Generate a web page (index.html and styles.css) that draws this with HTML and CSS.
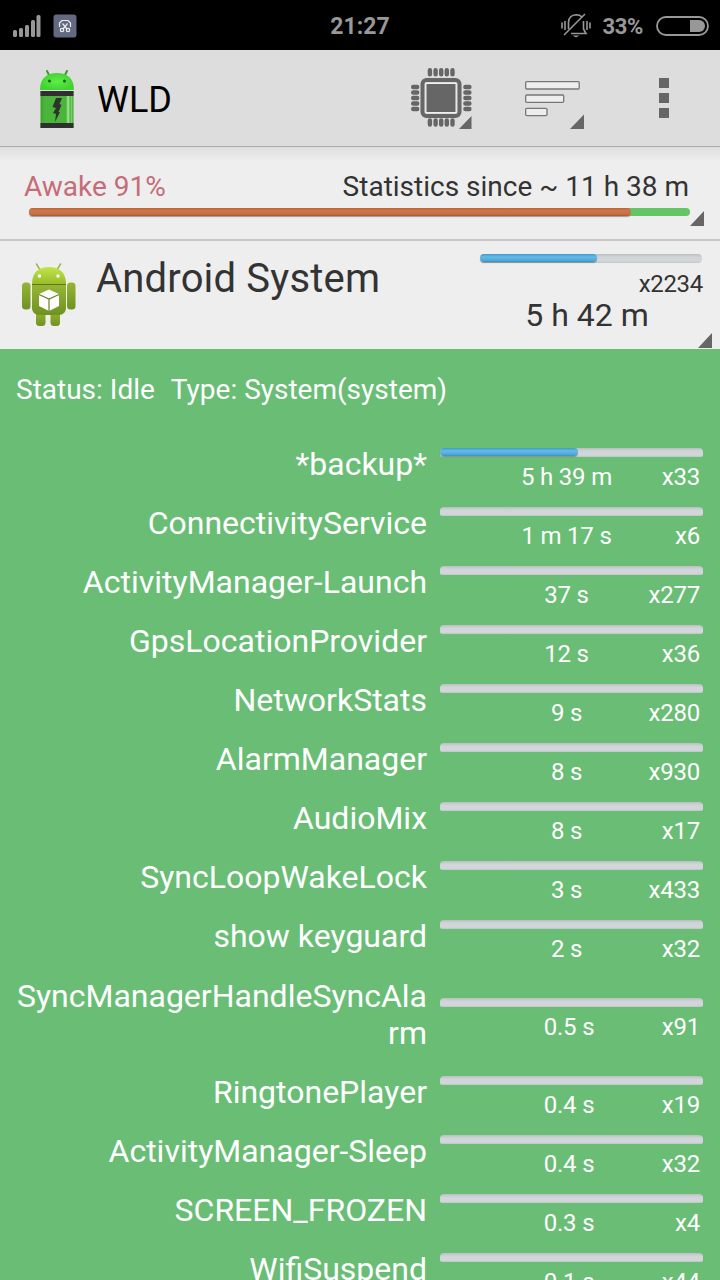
FILE: index.html
```html
<!DOCTYPE html>
<html lang="en">
<head>
    <meta charset="UTF-8">
    <meta name="viewport" content="width=device-width, initial-scale=1.0">
    <title>WLD</title>
    <link rel="stylesheet" href="styles.css">
</head>
<body>
    <div class="status-bar">
        <div class="status-left">
            <svg width="28" height="22" viewBox="0 0 28 22" fill="#989898">
                <rect x="0" y="15" width="4" height="7" rx="1.5"/>
                <rect x="6" y="13" width="4" height="9" rx="1.5"/>
                <rect x="12" y="10" width="4" height="12" rx="1.5"/>
                <rect x="18" y="5" width="4" height="17" rx="1.5"/>
                <rect x="23.5" y="0" width="4" height="22" rx="1.5"/>
            </svg>
            <svg width="24" height="24" viewBox="0 0 24 24">
                <rect x="0.5" y="0.5" width="23" height="23" rx="3" fill="#636980"/>
                <g fill="none" stroke="#eee" stroke-width="1.2">
                    <path d="M6.5 13V9L9 6.500H15L17.500 9V13"/>
                    <path d="M9.500 9.500L14 15M14.500 9.500L10 15"/>
                    <circle cx="9" cy="16" r="1.700"/>
                    <circle cx="15" cy="16" r="1.700"/>
                </g>
            </svg>
        </div>
        <div class="clock">21:27</div>
        <div class="status-right">
            <svg width="30" height="25" viewBox="0 0 30 25" fill="none" stroke="#989898" stroke-width="1.600">
                <path d="M7.500 16V9C8 4 11 2 15 1.800C17.500 1.800 19.500 2.500 21 4M22.500 8V16L25 20.500H10"/>
                <path d="M3 22L24 1"/>
                <path d="M1 9.500V15.500M4 8V17M26 8V17M29 9.500V15.500"/>
                <path d="M11.500 22.500H18.500L15 24.500Z" fill="#989898" stroke="none"/>
            </svg>
            <span class="percent">33%</span>
            <svg width="53" height="20" viewBox="0 0 53 20">
                <rect x="1" y="1" width="51" height="18" rx="9" fill="none" stroke="#989898" stroke-width="1.800"/>
                <path d="M34 4H43A6 6 0 0 1 43 16H34Z" fill="#989898"/>
            </svg>
        </div>
    </div>

    <div class="action-bar">
        <svg class="app-icon" width="36" height="60" viewBox="0 0 36 60">
            <defs>
                <linearGradient id="can" x1="0" x2="1" y1="0" y2="0">
                    <stop offset="0" stop-color="#3ea52b"/>
                    <stop offset="0.15" stop-color="#4cb63c"/>
                    <stop offset="0.77" stop-color="#4bb43b"/>
                    <stop offset="0.84" stop-color="#a5e79b"/>
                    <stop offset="0.9" stop-color="#4eb83e"/>
                    <stop offset="0.94" stop-color="#72d466"/>
                    <stop offset="1" stop-color="#3f9f30"/>
                </linearGradient>
                <radialGradient id="head">
                    <stop offset="0" stop-color="#5fee4b"/>
                    <stop offset="1" stop-color="#42d332"/>
                </radialGradient>
            </defs>
            <path d="M8 2L11 8M28 2L25 8" stroke="#3f963a" stroke-width="2" stroke-linecap="round"/>
            <path d="M1 21C1 9 8 4 18 4S35 9 35 21Z" fill="url(#head)"/>
            <circle cx="10.500" cy="12" r="1.500" fill="#17601b"/>
            <circle cx="25.500" cy="12" r="1.500" fill="#17601b"/>
            <rect x="1.500" y="22" width="33" height="37" fill="url(#can)"/>
            <rect x="1.500" y="22" width="33" height="5" fill="#303030"/>
            <rect x="1.500" y="54" width="33" height="5" fill="#303030"/>
            <path d="M17 29H23L20.500 35L22.500 36L19.500 43H21L16 53L17 45L14 44L17 39L13.500 38Z" fill="#2b352b"/>
        </svg>
        <h1 class="app-title">WLD</h1>
        <svg class="icon-cpu" width="64" height="64" viewBox="0 0 64 64">
            <g stroke="#666" stroke-width="4.400" stroke-linecap="round">
                <path d="M8.900 5.200V9.300M14.600 5.200V9.300M20.200 5.200V9.300M25.800 5.200V9.300M31.500 5.200V9.300M8.900 55.500V59.500M14.600 55.500V59.500M20.200 55.500V59.500M25.800 55.500V59.500M31.500 55.500V59.500" transform="translate(11 -2)"/>
                <path d="M3.200 20H7.200M3.200 25.500H7.200M3.200 31H7.200M3.200 36.500H7.200M3.200 42H7.200M55.400 20H59.400M55.400 25.500H59.400M55.400 31H59.400M55.400 36.500H59.400M55.400 42H59.400"/>
            </g>
            <rect x="12.500" y="13" width="37" height="36" rx="4" fill="#ddd" stroke="#666" stroke-width="4"/>
            <rect x="16" y="16.500" width="30" height="29" fill="#666" stroke="#f0f0f0" stroke-width="1"/>
            <path d="M48 62.500H62V48Z" fill="#666" stroke="#ddd" stroke-width="1"/>
        </svg>
        <svg class="icon-sort" width="60" height="49" viewBox="0 0 60 49">
            <g fill="#eee" stroke="#777" stroke-width="1.300">
                <rect x="0.700" y="1.700" width="53.500" height="7.300" rx="1"/>
                <rect x="0.700" y="15" width="38" height="7.300" rx="1"/>
                <rect x="0.700" y="28.300" width="21.300" height="7.300" rx="1"/>
            </g>
            <path d="M45 49H59V34.500Z" fill="#666"/>
        </svg>
        <svg class="icon-more" width="10" height="40" viewBox="0 0 10 40" fill="#666">
            <rect width="10" height="10"/>
            <rect y="15" width="10" height="10"/>
            <rect y="30" width="10" height="10"/>
        </svg>
    </div>

    <div class="stats">
        <div class="stats-text">
            <span class="awake">Awake 91%</span>
            <span>Statistics since ~ 11 h 38 m</span>
        </div>
        <div class="awake-bar"><div class="awake-fill" style="width: 91%"></div></div>
        <div class="corner"></div>
    </div>

    <div class="app-row">
        <svg class="android-icon" width="56" height="64" viewBox="0 0 56 64">
            <defs>
                <linearGradient id="droid" x1="0" x2="0" y1="0" y2="1">
                    <stop offset="0" stop-color="#96b632"/>
                    <stop offset="1" stop-color="#6e9223"/>
                </linearGradient>
                <linearGradient id="droidHead" x1="0" x2="0" y1="0" y2="1">
                    <stop offset="0" stop-color="#c2e54b"/>
                    <stop offset="1" stop-color="#98bd2a"/>
                </linearGradient>
            </defs>
            <path d="M15.500 1L19 7M39.500 1L36 7" stroke="#9ab84b" stroke-width="1.500" stroke-linecap="round"/>
            <g fill="url(#droid)">
                <rect x="15" y="48" width="9.500" height="15" rx="3.500"/>
                <rect x="29.500" y="48" width="9.500" height="15" rx="3.500"/>
                <rect x="1" y="19.500" width="8.500" height="27" rx="3.500"/>
                <rect x="46" y="19.500" width="8.500" height="27" rx="3.500"/>
                <path d="M11 22H45V45C45 49 42 52 38 52H18C14 52 11 49 11 45Z"/>
            </g>
            <path d="M11 21C11 9 18 4 28 4S45 9 45 21Z" fill="url(#droidHead)"/>
            <path d="M11 21.500H45" stroke="#60771f" stroke-width="1"/>
            <circle cx="18.500" cy="13" r="1.700" fill="#fff"/>
            <circle cx="37" cy="13" r="1.700" fill="#fff"/>
            <path d="M28 26.500L38 31V43L28 48L18 43V31Z" fill="#fff"/>
            <path d="M18 31.500L28 36L38 31.500M28 36V48" fill="none" stroke="#64842a" stroke-width="1.200"/>
        </svg>
        <div class="app-name">Android System</div>
        <div class="app-usage">
            <div class="bar"><div class="fill" style="width: 52.5%"></div></div>
            <div class="app-count">x2234</div>
            <div class="app-time">5 h 42 m</div>
        </div>
        <div class="corner"></div>
    </div>

    <div class="details">
        <div class="app-status"><span>Status: Idle</span><span>Type: System(system)</span></div>
        <div class="wakelock">
            <div class="name">*backup*</div>
            <div class="usage">
                <div class="bar"><div class="fill" style="width: 52.3%"></div></div>
                <div class="values"><span class="time">5 h 39 m</span><span class="count">x33</span></div>
            </div>
        </div>
        <div class="wakelock">
            <div class="name">ConnectivityService</div>
            <div class="usage">
                <div class="bar"></div>
                <div class="values"><span class="time">1 m 17 s</span><span class="count">x6</span></div>
            </div>
        </div>
        <div class="wakelock">
            <div class="name">ActivityManager-Launch</div>
            <div class="usage">
                <div class="bar"></div>
                <div class="values"><span class="time">37 s</span><span class="count">x277</span></div>
            </div>
        </div>
        <div class="wakelock">
            <div class="name">GpsLocationProvider</div>
            <div class="usage">
                <div class="bar"></div>
                <div class="values"><span class="time">12 s</span><span class="count">x36</span></div>
            </div>
        </div>
        <div class="wakelock">
            <div class="name">NetworkStats</div>
            <div class="usage">
                <div class="bar"></div>
                <div class="values"><span class="time">9 s</span><span class="count">x280</span></div>
            </div>
        </div>
        <div class="wakelock">
            <div class="name">AlarmManager</div>
            <div class="usage">
                <div class="bar"></div>
                <div class="values"><span class="time">8 s</span><span class="count">x930</span></div>
            </div>
        </div>
        <div class="wakelock">
            <div class="name">AudioMix</div>
            <div class="usage">
                <div class="bar"></div>
                <div class="values"><span class="time">8 s</span><span class="count">x17</span></div>
            </div>
        </div>
        <div class="wakelock">
            <div class="name">SyncLoopWakeLock</div>
            <div class="usage">
                <div class="bar"></div>
                <div class="values"><span class="time">3 s</span><span class="count">x433</span></div>
            </div>
        </div>
        <div class="wakelock">
            <div class="name">show keyguard</div>
            <div class="usage">
                <div class="bar"></div>
                <div class="values"><span class="time">2 s</span><span class="count">x32</span></div>
            </div>
        </div>
        <div class="wakelock two-line">
            <div class="name">SyncManagerHandleSyncAlarm</div>
            <div class="usage">
                <div class="bar"></div>
                <div class="values"><span class="time fraction">0.5 s</span><span class="count">x91</span></div>
            </div>
        </div>
        <div class="wakelock">
            <div class="name">RingtonePlayer</div>
            <div class="usage">
                <div class="bar"></div>
                <div class="values"><span class="time fraction">0.4 s</span><span class="count">x19</span></div>
            </div>
        </div>
        <div class="wakelock">
            <div class="name">ActivityManager-Sleep</div>
            <div class="usage">
                <div class="bar"></div>
                <div class="values"><span class="time fraction">0.4 s</span><span class="count">x32</span></div>
            </div>
        </div>
        <div class="wakelock">
            <div class="name">SCREEN_FROZEN</div>
            <div class="usage">
                <div class="bar"></div>
                <div class="values"><span class="time fraction">0.3 s</span><span class="count">x4</span></div>
            </div>
        </div>
        <div class="wakelock">
            <div class="name">WifiSuspend</div>
            <div class="usage">
                <div class="bar"></div>
                <div class="values"><span class="time fraction">0.1 s</span><span class="count">x44</span></div>
            </div>
        </div>
    </div>
</body>
</html>
```
FILE: styles.css
```css
* { box-sizing: border-box; }
body {
    font-family: Roboto, sans-serif;
    width: 720px;
    height: 1280px;
    margin: 0;
    overflow: hidden;
    display: flex;
    flex-direction: column;
    background-color: #eee;
    color: #333;
}
svg { display: block; flex: none; }

/* status bar */
.status-bar {
    height: 50px;
    flex: none;
    display: grid;
    grid-template-columns: 1fr auto 1fr;
    align-items: center;
    padding: 1px 11px 0 13px;
    background-color: #000;
    color: #989898;
    font-weight: bold;
}
.status-left { display: flex; align-items: center; gap: 12px; }
.clock { margin-right: 2px; padding-top: 1px; font-size: 23px; }
.status-right { display: flex; align-items: center; justify-content: flex-end; gap: 13px; }
.percent { margin-left: -2px; padding-top: 1px; font-size: 22px; letter-spacing: -0.3px; }

/* action bar */
.action-bar {
    height: 97px;
    flex: none;
    display: flex;
    align-items: flex-start;
    padding: 0 51px 0 39px;
    background-color: #ddd;
    border-bottom: 1px solid #aaa;
}
.app-icon { margin-top: 19px; }
.app-title { margin: 0 auto 0 22px; font-size: 36px; font-weight: normal; line-height: 42px; padding-top: 29px; color: #000; }
.icon-cpu { margin: 17px 51px 0 0; }
.icon-sort { margin: 30px 74px 0 0; }
.icon-more { margin-top: 28px; }

/* small dark triangle of a spinner */
.corner {
    position: absolute;
    right: 16px;
    bottom: 13px;
    width: 14px;
    height: 15px;
    background-color: #666;
    clip-path: polygon(100% 0, 100% 100%, 0 100%);
}

.stats {
    position: relative;
    height: 94px;
    flex: none;
    padding: 23px 30px 0 29px;
    background: linear-gradient(#dedede, #eee 14px);
    border-bottom: 2px solid #c6c6c6;
}
.stats-text { display: flex; justify-content: space-between; margin: 0 1px 0 -5px; font-size: 28px; line-height: 33px; }
.awake { color: #c66c78; }
.awake-bar { height: 8px; margin-top: 5px; border-radius: 4px; background-color: #65c466; }
.awake-fill {
    height: 8px;
    border-radius: 4px;
    background: linear-gradient(#b86637, #d47347 30%, #ca6f45 75%, #966039);
    box-shadow: 0 1px 1px #999;
}

.app-row { position: relative; height: 108px; flex: none; display: flex; padding: 0 18px 0 21px; }
.app-row .corner { right: 8px; bottom: 1px; }
.android-icon { margin-top: 22px; }
.app-name { margin-left: 19px; margin-top: 14px; font-size: 40px; line-height: 47px; letter-spacing: 0.18px; }
.app-usage { width: 222px; margin-left: auto; padding-top: 13px; }
.app-count { margin-top: 7px; margin-right: -1px; text-align: right; font-size: 24px; line-height: 28px; letter-spacing: -0.3px; }
.app-time { margin-top: -1px; margin-right: 8px; text-align: center; font-size: 32px; line-height: 37px; }

.bar { height: 9px; border-radius: 4px; background: linear-gradient(#b9bfc0, #d1d5d9 35%, #d2d7da 80%, #bcc7c5); }
.fill {
    height: 8px;
    border-radius: 4px;
    background: linear-gradient(#3d9bcd, #67b9e3 35%, #52addd 75%, #3c90bd);
    box-shadow: 0 1px 1px rgba(0,0,0,0.3);
}

.details { flex: 1; padding: 24px 17px 0 16px; background-color: #69bd75; color: #fff; }
.app-status { display: flex; gap: 16px; margin-bottom: 29px; font-size: 28px; line-height: 33px; }
.wakelock { height: 59px; display: flex; align-items: center; }
.wakelock.two-line { height: 97px; }
.name { width: 411px; margin-right: 13px; text-align: right; font-size: 32px; line-height: 37px; overflow-wrap: anywhere; }
.usage { flex: 1; margin-bottom: -9px; }
.usage .bar { border-radius: 4px 4px 2px 2px; }
/* time and count share one line, time in the middle */
.values { display: grid; margin-top: 6px; font-size: 24px; line-height: 28px; letter-spacing: -0.2px; }
.time, .count { grid-area: 1 / 1; }
.time { text-align: center; padding-right: 10px; }
.time.fraction { padding-right: 5px; }
.count { text-align: right; padding-right: 3px; }
```
